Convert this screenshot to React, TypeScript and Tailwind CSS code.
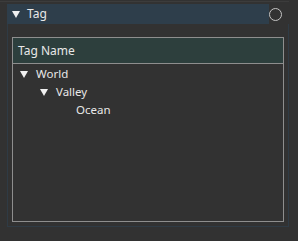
import React from "react";

const Tri = ({ className = "" }: { className?: string }) => (
  <svg width="8" height="7" viewBox="0 0 8 7" className={className}>
    <polygon points="0,0 8,0 4,7" fill="#f0f0f0" />
  </svg>
);

const rows = [
  { name: "World", depth: 0, open: true },
  { name: "Valley", depth: 1, open: true },
  { name: "Ocean", depth: 2, open: false },
];

export default function App() {
  return (
    <div
      className="w-[298px] h-[241px] bg-[#323232] overflow-hidden text-[11.5px] text-[#e8e8e8]"
      style={{ fontFamily: '"Noto Sans", "Open Sans", sans-serif' }}
    >
      {/* leftover edge of the panel above */}
      <div className="mt-[1px] w-[289px] h-[1px] bg-[#3c3c3c]" />

      <div className="mt-[2px] ml-[7px] w-[282px]">
        {/* Section header */}
        <div className="flex items-center h-[20px]">
          <div className="flex items-center w-[262px] h-full bg-[#2e3e4b] pl-[5px] text-[12px]">
            <Tri />
            <span className="ml-[7px] leading-none">Tag</span>
          </div>
          <div className="w-[13px] h-[13px] rounded-full border-[1.5px] border-[#c4c4c4]" />
        </div>

        {/* Section body */}
        <div className="border-x border-b border-[#2f3b45] h-[203px] pt-[13px] px-[4px] pb-[4px]">
          <div className="h-[185px] border border-[#8e8e8e]">
            <div className="h-[26px] bg-[#2d3f3d] border-b border-[#8e8e8e] flex items-center pl-[5px] text-[12px]">
              Tag Name
            </div>
            <div className="pt-[1px]">
              {rows.map((r) => (
                <div
                  key={r.name}
                  className="h-[18px] flex items-center"
                  style={{ paddingLeft: 7 + r.depth * 20 }}
                >
                  <div className="w-[16px]">{r.open && <Tri />}</div>
                  <span>{r.name}</span>
                </div>
              ))}
            </div>
          </div>
        </div>
      </div>
    </div>
  );
}
